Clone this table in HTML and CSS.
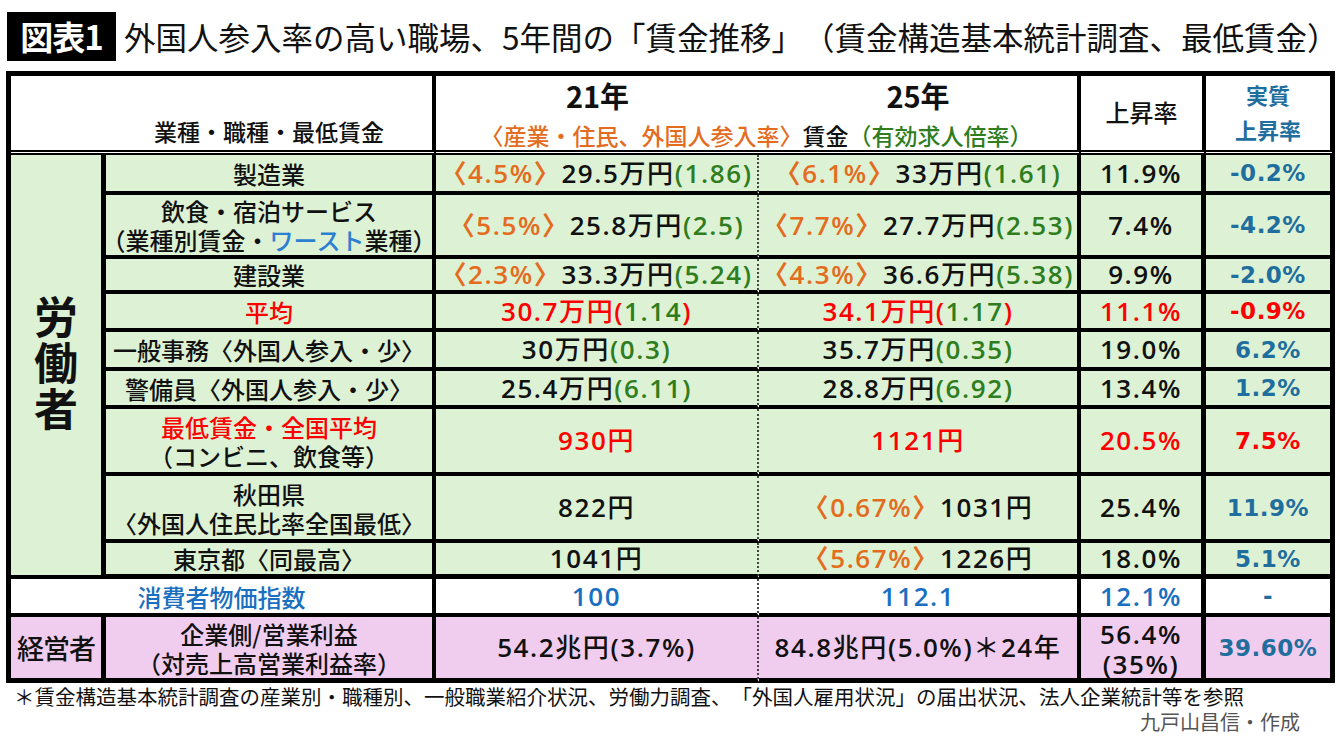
FILE: index.html
```html
<!DOCTYPE html>
<html lang="ja">
<head>
<meta charset="utf-8">
<title>図表1</title>
<link rel="stylesheet" href="styles.css">
</head>
<body>
<div class="page">
  <header class="title">
    <span class="tag">図表1</span>
    <h1 class="headline">外国人参入率の高い職場、5年間の「賃金推移」（賃金構造基本統計調査、最低賃金）</h1>
  </header>

  <div class="tbl">
    <div class="cell hd hd-cat">業種・職種・最低賃金</div>
    <div class="cell hd hd-years">
      <div class="yr">21年</div>
      <div class="yr">25年</div>
      <div class="sub"><span class="o">〈産業・住民、外国人参入率〉</span>賃金<span class="g">（有効求人倍率）</span></div>
    </div>
    <div class="cell hd hd-rise">上昇率</div>
    <div class="cell hd hd-real c6">実質<br>上昇率</div>

    <div class="cell worker gr"><span>労</span><span>働</span><span>者</span></div>

    <div class="cell c2 gr">製造業</div>
    <div class="cell c3 gr num"><span><span class="o">〈4.5%〉</span>29.5<span class="u">万円</span><span class="g">(1.86)</span></span></div>
    <div class="cell c4 gr num"><span><span class="o">〈6.1%〉</span>33<span class="u">万円</span><span class="g">(1.61)</span></span></div>
    <div class="cell c5 gr num">11.9%</div>
    <div class="cell c6 gr real">-0.2%</div>

    <div class="cell c2 gr"><span>飲食・宿泊サービス</span><span>（業種別賃金・<span class="bl">ワースト</span>業種）</span></div>
    <div class="cell c3 gr num"><span><span class="o">〈5.5%〉</span>25.8<span class="u">万円</span><span class="g">(2.5)</span></span></div>
    <div class="cell c4 gr num"><span><span class="o">〈7.7%〉</span>27.7<span class="u">万円</span><span class="g">(2.53)</span></span></div>
    <div class="cell c5 gr num">7.4%</div>
    <div class="cell c6 gr real">-4.2%</div>

    <div class="cell c2 gr">建設業</div>
    <div class="cell c3 gr num"><span><span class="o">〈2.3%〉</span>33.3<span class="u">万円</span><span class="g">(5.24)</span></span></div>
    <div class="cell c4 gr num"><span><span class="o">〈4.3%〉</span>36.6<span class="u">万円</span><span class="g">(5.38)</span></span></div>
    <div class="cell c5 gr num">9.9%</div>
    <div class="cell c6 gr real">-2.0%</div>

    <div class="cell c2 gr r">平均</div>
    <div class="cell c3 gr num r"><span>30.7<span class="u">万円</span>(<span class="g">1.14</span>)</span></div>
    <div class="cell c4 gr num r"><span>34.1<span class="u">万円</span>(<span class="g">1.17</span>)</span></div>
    <div class="cell c5 gr num r">11.1%</div>
    <div class="cell c6 gr real r">-0.9%</div>

    <div class="cell c2 gr">一般事務〈外国人参入・少〉</div>
    <div class="cell c3 gr num"><span>30<span class="u">万円</span><span class="g">(0.3)</span></span></div>
    <div class="cell c4 gr num"><span>35.7<span class="u">万円</span><span class="g">(0.35)</span></span></div>
    <div class="cell c5 gr num">19.0%</div>
    <div class="cell c6 gr real">6.2%</div>

    <div class="cell c2 gr">警備員〈外国人参入・少〉</div>
    <div class="cell c3 gr num"><span>25.4<span class="u">万円</span><span class="g">(6.11)</span></span></div>
    <div class="cell c4 gr num"><span>28.8<span class="u">万円</span><span class="g">(6.92)</span></span></div>
    <div class="cell c5 gr num">13.4%</div>
    <div class="cell c6 gr real">1.2%</div>

    <div class="cell c2 gr"><span class="r">最低賃金・全国平均</span><span>（コンビニ、飲食等）</span></div>
    <div class="cell c3 gr num r"><span>930<span class="u">円</span></span></div>
    <div class="cell c4 gr num r"><span>1121<span class="u">円</span></span></div>
    <div class="cell c5 gr num r">20.5%</div>
    <div class="cell c6 gr real r">7.5%</div>

    <div class="cell c2 gr"><span>秋田県</span><span>〈外国人住民比率全国最低〉</span></div>
    <div class="cell c3 gr num"><span>822<span class="u">円</span></span></div>
    <div class="cell c4 gr num"><span><span class="o">〈0.67%〉</span>1031<span class="u">円</span></span></div>
    <div class="cell c5 gr num">25.4%</div>
    <div class="cell c6 gr real">11.9%</div>

    <div class="cell c2 gr end">東京都〈同最高〉</div>
    <div class="cell c3 gr num end"><span>1041<span class="u">円</span></span></div>
    <div class="cell c4 gr num end"><span><span class="o">〈5.67%〉</span>1226<span class="u">円</span></span></div>
    <div class="cell c5 gr num end">18.0%</div>
    <div class="cell c6 gr real end">5.1%</div>

    <div class="cell cpi-label wh">消費者物価指数</div>
    <div class="cell c3 wh num cpi">100</div>
    <div class="cell c4 wh num cpi">112.1</div>
    <div class="cell c5 wh num cpi">12.1%</div>
    <div class="cell c6 wh real">-</div>

    <div class="cell mgr pk last">経営者</div>
    <div class="cell c2 pk last"><span>企業側/営業利益</span><span>（対売上高営業利益率）</span></div>
    <div class="cell c3 pk num last"><span>54.2<span class="u">兆円</span>(3.7%)</span></div>
    <div class="cell c4 pk num last"><span>84.8<span class="u">兆円</span>(5.0%)<span class="u">＊</span>24<span class="u">年</span></span></div>
    <div class="cell c5 pk num last two"><span>56.4%</span><span>(35%)</span></div>
    <div class="cell c6 pk real last">39.60%</div>
  </div>

  <p class="note">＊賃金構造基本統計調査の産業別・職種別、一般職業紹介状況、労働力調査、「外国人雇用状況」の届出状況、法人企業統計等を参照</p>
  <p class="credit">九戸山昌信・作成</p>
</div>
</body>
</html>
```

FILE: styles.css
```css
html, body {
  margin: 0;
  padding: 0;
  background: #fff;
}

body {
  font-family: "Noto Sans CJK JP", "Noto Sans", sans-serif;
  color: #111;
  width: 1340px;
  height: 740px;
  overflow: hidden;
}

.page {
  padding: 12px 0 0 0;
}

.title {
  display: flex;
  align-items: center;
  gap: 8px;
  padding-left: 7px;
  height: 49px;
}

.tag {
  flex: none;
  display: flex;
  align-items: center;
  justify-content: center;
  width: 109px;
  height: 49px;
  background: #000;
  color: #fff;
  font-weight: 700;
  font-size: 33px;
  line-height: 1;
  letter-spacing: -1px;
}

.headline {
  flex: none;
  margin: 0;
  font-size: 31.5px;
  font-weight: 400;
  line-height: 1.2;
  white-space: nowrap;
  text-spacing-trim: space-all;
}

.tbl {
  margin: 10px 0 0 6px;
  width: 1324px;
  display: grid;
  grid-template-columns: 95px 330px 323px 322px 125px 129px;
  grid-template-rows: 79px 40px 64px 35px 38px 39px 38px 67px 67px 36px 38px 66px;
  border-left: 5px solid #000;
  border-top: 5px solid #000;
}

.cell {
  box-sizing: border-box;
  border-right: 4px solid #000;
  border-bottom: 4px solid #000;
  display: flex;
  flex-direction: column;
  align-items: center;
  justify-content: center;
  text-align: center;
  white-space: nowrap;
  font-weight: 500;
}

.gr { background: #ddf2d4; }
.wh { background: #fff; }
.pk { background: #f0cdee; }

/* header */
.hd {
  background: #fff;
  border-bottom: 5px double #000;
}

.hd-cat {
  grid-column: 1 / 3;
  justify-content: flex-end;
  padding-bottom: 2px;
  padding-left: 95px;
  font-size: 23px;
}

.hd-years {
  grid-column: 3 / 5;
  display: grid;
  grid-template-columns: 323px 1fr;
  grid-template-rows: 38px 36px;
  align-items: center;
}

.yr {
  font-size: 29px;
  font-weight: 700;
  line-height: 1;
}

.sub {
  grid-column: 1 / 3;
  font-size: 23px;
  line-height: 1;
  padding-top: 6px;
  text-spacing-trim: space-all;
}

.hd-rise {
  font-size: 24px;
  padding-bottom: 4px;
}

.hd-real {
  color: #1f6e9e;
  font-weight: 700;
  font-size: 22px;
  line-height: 35px;
  padding-bottom: 2px;
}

/* body columns */
.worker {
  grid-column: 1;
  grid-row: 2 / 11;
  border-right-width: 5px;
  font-size: 44px;
  font-weight: 700;
  line-height: 46px;
  padding-bottom: 8px;
}

.worker span {
  display: block;
  height: 46px;
}

.c2 {
  font-size: 24px;
  line-height: 29px;
}

.c3 {
  border-right: 2px dotted #444;
}

.c5 { border-right-width: 5px; }
.c6 { border-right-width: 5px; }

.end { border-bottom-width: 5px; }
.last { border-bottom-width: 5px; }

.num {
  font-family: "Open Sans", "Noto Sans CJK JP", sans-serif;
  font-size: 26px;
  font-weight: 600;
  letter-spacing: 1.6px;
  line-height: 1.1;
  text-spacing-trim: space-all;
}

.u {
  font-weight: 500;
}

.two {
  line-height: 30px;
  padding-top: 2px;
}

.real {
  font-family: "DejaVu Sans", "Noto Sans CJK JP", sans-serif;
  font-size: 23px;
  font-weight: 700;
  letter-spacing: 0.5px;
  color: #1f6e9e;
}

.cpi-label {
  grid-column: 1 / 3;
  color: #1a6fc0;
  font-size: 24px;
  border-right-width: 4px;
}

.cpi { color: #1a6fc0; }

.mgr {
  border-right-width: 5px;
  font-size: 27px;
  letter-spacing: -1px;
}

.o { color: #e36c1e; }
.g { color: #2f7d1e; }
.r { color: #ff0000; }
.r .g { color: #2f7d1e; }
.bl { color: #2d7fd1; }

.note {
  margin: 0;
  padding-left: 14px;
  font-size: 20.5px;
  line-height: 26px;
  white-space: nowrap;
  text-spacing-trim: space-all;
}

.credit {
  margin: 0;
  padding-right: 40px;
  text-align: right;
  font-size: 20px;
  line-height: 26px;
  color: #555;
}
```
